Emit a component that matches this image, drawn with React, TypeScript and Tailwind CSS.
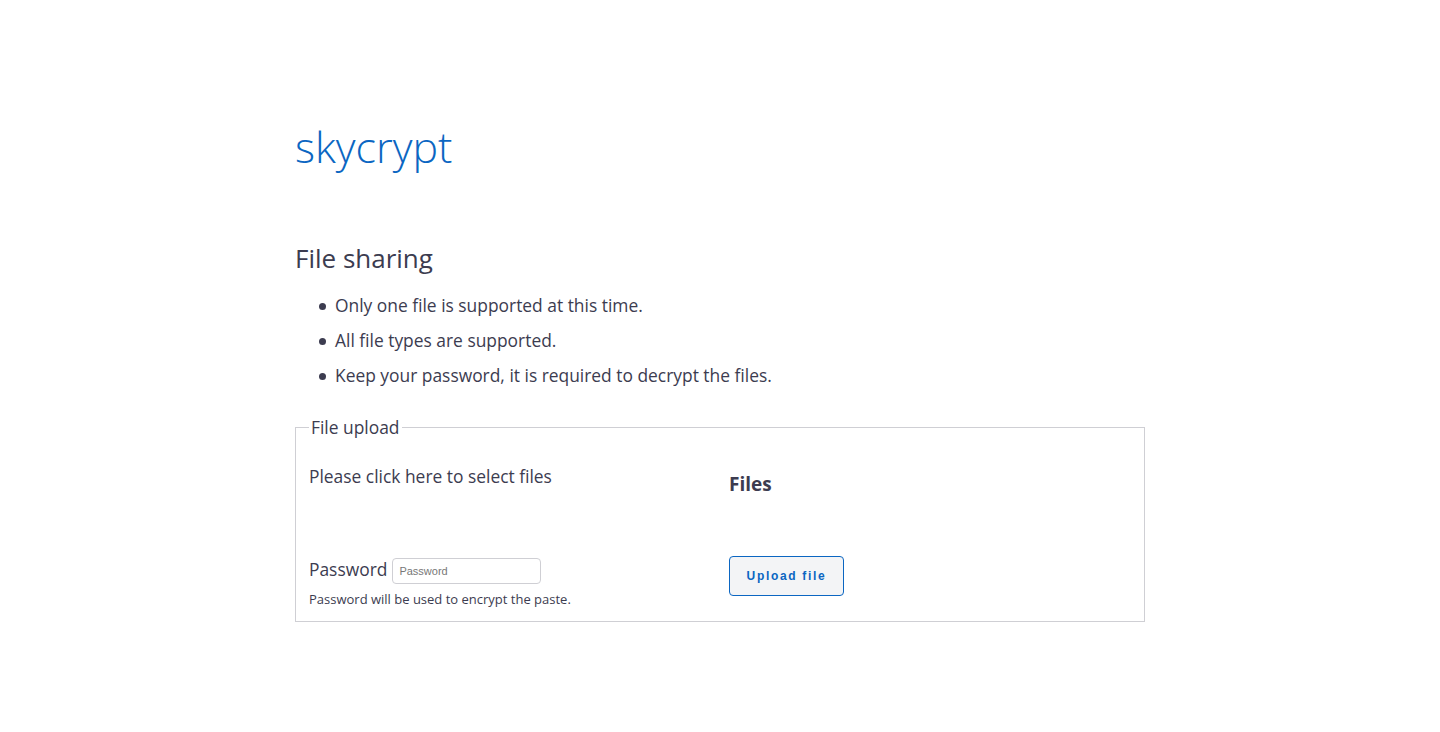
const items = [
  'Only one file is supported at this time.',
  'All file types are supported.',
  'Keep your password, it is required to decrypt the files.',
]

export default function App() {
  return (
    <div className="min-h-screen bg-white font-['Open_Sans',sans-serif] text-[#3c3c50]">
      <div className="mx-auto w-[850px] pt-[112px]">
        <h1 className="text-[43px] font-light leading-[70px] text-[#0b66c2]">skycrypt</h1>

        <h2 className="mt-[58px] text-[26px] leading-[36px]">File sharing</h2>

        <ul className="mt-[17px] pl-[40px] text-[17.4px] leading-[25px]">
          {items.map((item, i) => (
            <li
              key={item}
              className={`relative before:absolute before:left-[-16px] before:top-[10px] before:h-[7px] before:w-[7px] before:rounded-full before:bg-[#3c3c50] before:content-[''] ${i < items.length - 1 ? 'mb-[10px]' : ''}`}
            >
              {item}
            </li>
          ))}
        </ul>

        <fieldset className="mt-[27px] border border-[#cfcfd4] px-[13px] pb-[13px] pt-[25px]">
          <legend className="px-[2px] text-[17.4px] leading-[24px]">File upload</legend>
          <div className="grid grid-cols-[420px_1fr]">
            <div className="flex flex-col">
              <p className="text-[17.4px] leading-[24px]">Please click here to select files</p>
              <div className="mt-[68px] flex items-center gap-[5px]">
                <label className="text-[17.4px] leading-[24px]">Password</label>
                <input
                  type="password"
                  placeholder="Password"
                  className="mt-[2px] mb-[-2px] h-[26px] w-[149px] rounded-[4px] border border-[#cfcfd4] px-[6px] text-[11px] font-['Liberation_Sans',sans-serif] placeholder-[#777] outline-none"
                />
              </div>
              <p className="mt-[8px] text-[13px] leading-[18px]">Password will be used to encrypt the paste.</p>
            </div>
            <div className="flex flex-col">
              <h3 className="mt-[6px] text-[19px] font-bold leading-[28px]">Files</h3>
              <div className="mt-[58px]">
                <button className="h-[40px] w-[115px] rounded-[4px] border border-[#0b66c2] bg-[#f3f4f6] text-[12px] font-bold tracking-[0.14em] text-[#0b66c2] font-['Liberation_Sans',sans-serif]">
                  Upload file
                </button>
              </div>
            </div>
          </div>
        </fieldset>
      </div>
    </div>
  )
}
